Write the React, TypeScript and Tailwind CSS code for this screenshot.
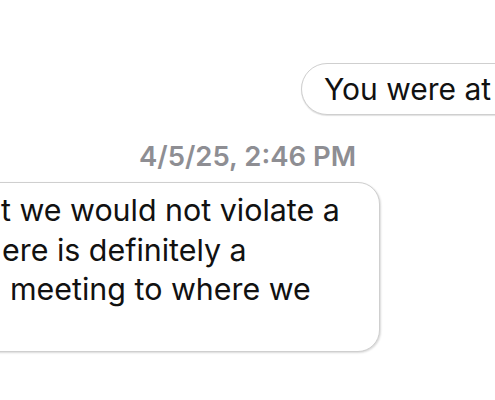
export default function App() {
  const lines = [
    { text: 't we would not violate a', shift: 'ml-0' },
    { text: 'ere is definitely a', shift: 'ml-[1px]' },
    { text: 'meeting to where we', shift: 'ml-[9px]' },
    { text: '\u00a0', shift: 'ml-0' },
  ];

  return (
    <div
      className="w-[495px] h-[400px] overflow-hidden bg-white text-[#111111]"
      style={{ fontFamily: 'Inter, "Liberation Sans", sans-serif' }}
    >
      {/* Outgoing bubble, clipped at the right edge */}
      <div className="flex pt-[63px] pl-[301px]">
        <div className="shrink-0 whitespace-nowrap rounded-[27px] border-[1.5px] border-[#cfcfcf] bg-white pl-[22px] pr-[40px] pt-[6px] pb-[5px] text-[30px] leading-[39px] shadow-[0_1px_1px_rgba(0,0,0,0.12)]">
          You were at the meeting
        </div>
      </div>

      {/* Timestamp */}
      <div className="mt-[25px] text-center text-[27.5px] leading-[32px] font-semibold text-[#8e8e93]">
        4/5/25, 2:46 PM
      </div>

      {/* Incoming bubble, clipped at the left edge */}
      <div className="mt-[10px] -ml-[40px] w-[420px] rounded-[22px] border-[1.5px] border-[#cfcfcf] bg-white pt-[8px] pb-[2px] pl-[40px] text-[30.4px] leading-[39.5px] shadow-[1px_1px_2px_rgba(0,0,0,0.15)]">
        {lines.map((l, i) => (
          <div key={i} className="flex whitespace-nowrap">
            <span className={l.shift}>{l.text}</span>
          </div>
        ))}
      </div>
    </div>
  );
}
